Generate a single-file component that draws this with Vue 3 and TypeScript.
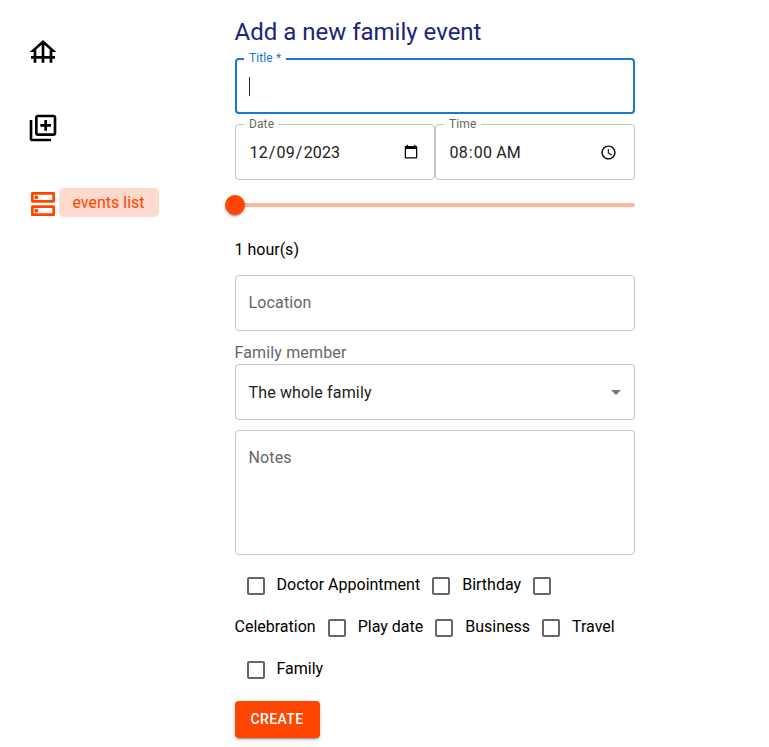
<script setup lang="ts">
import { ref } from 'vue'

const title = ref('')
const date = ref('2023-12-09')
const time = ref('08:00')
const location = ref('')
const notes = ref('')
const categories: string[] = ['Doctor Appointment', 'Birthday', 'Celebration', 'Play date', 'Business', 'Travel', 'Family']
const selected = ref<string[]>([])

function toggle(name: string): void {
  selected.value = selected.value.includes(name)
    ? selected.value.filter((item) => item !== name)
    : [...selected.value, name]
}
</script>

<template>
  <div class="page">
    <nav class="sidebar">
      <a class="nav-item">
        <svg class="nav-icon" viewBox="0 0 24 24"><path d="M19 12h3L12 3 2 12h3v3H3v2h2v3h2v-3h4v3h2v-3h4v3h2v-3h2v-2h-2v-3zM7 15v-4.81l4-3.6V15H7zm6 0V6.59l4 3.6V15h-4z" /></svg>
      </a>
      <a class="nav-item">
        <svg class="nav-icon" viewBox="0 0 24 24"><path d="M4 6H2v14c0 1.1.9 2 2 2h14v-2H4V6zm16-4H8c-1.1 0-2 .9-2 2v12c0 1.1.9 2 2 2h12c1.1 0 2-.9 2-2V4c0-1.1-.9-2-2-2zm0 14H8V4h12v12zm-7-2h2v-3h3V9h-3V6h-2v3h-3v2h3v3z" /></svg>
      </a>
      <a class="nav-item active">
        <svg class="nav-icon" viewBox="0 0 24 24"><path d="M19 15v4H5v-4h14m1-2H4c-.55 0-1 .45-1 1v6c0 .55.45 1 1 1h16c.55 0 1-.45 1-1v-6c0-.55-.45-1-1-1zM7 18.5c-.82 0-1.5-.67-1.5-1.5s.68-1.5 1.5-1.5 1.5.67 1.5 1.5-.67 1.5-1.5 1.5zM19 5v4H5V5h14m1-2H4c-.55 0-1 .45-1 1v6c0 .55.45 1 1 1h16c.55 0 1-.45 1-1V4c0-.55-.45-1-1-1zM7 8.5c-.82 0-1.5-.67-1.5-1.5S6.18 5.5 7 5.5s1.5.68 1.5 1.5S7.83 8.5 7 8.5z" /></svg>
        <span class="nav-label">events list</span>
      </a>
    </nav>

    <form class="form" @submit.prevent>
      <h1>Add a new family event</h1>

      <div class="field focused">
        <span class="caret"></span>
        <input v-model="title" class="control" type="text" aria-label="Title" />
        <label class="floating">Title *</label>
      </div>

      <div class="row">
        <div class="field">
          <input v-model="date" class="control" type="date" />
          <label class="floating">Date</label>
        </div>
        <div class="field">
          <input v-model="time" class="control time" type="time" />
          <label class="floating">Time</label>
        </div>
      </div>

      <div class="slider">
        <span class="rail"></span>
        <span class="thumb"></span>
      </div>
      <p class="duration">1 hour(s)</p>

      <div class="field">
        <input v-model="location" class="control location" type="text" placeholder="Location" />
      </div>

      <div class="caption">Family member</div>
      <div class="field select">
        <span class="value">The whole family</span>
        <svg class="arrow" viewBox="0 0 24 24"><path d="M7 10l5 5 5-5z" /></svg>
      </div>

      <div class="field notes">
        <textarea v-model="notes" class="control" placeholder="Notes"></textarea>
      </div>

      <div class="checks">
        <template v-for="name in categories" :key="name"><span class="checkbox" role="checkbox" :aria-checked="selected.includes(name)" @click="toggle(name)"><svg viewBox="0 0 24 24"><path v-if="selected.includes(name)" d="M19 3H5c-1.11 0-2 .9-2 2v14c0 1.1.89 2 2 2h14c1.11 0 2-.9 2-2V5c0-1.1-.89-2-2-2zm-9 14l-5-5 1.41-1.41L10 14.17l7.59-7.59L19 8l-9 9z" /><path v-else d="M19 5v14H5V5h14m0-2H5c-1.1 0-2 .9-2 2v14c0 1.1.9 2 2 2h14c1.1 0 2-.9 2-2V5c0-1.1-.9-2-2-2z" /></svg></span><span>{{ name }}</span></template>
      </div>

      <button class="create" type="submit">Create</button>
    </form>
  </div>
</template>

<style>
body {
  background: #fff;
}
</style>

<style scoped>
.page {
  display: flex;
  height: 747px;
  overflow: hidden;
  font-family: Roboto, "Liberation Sans", sans-serif;
  font-size: 16px;
  color: #000;
}
.sidebar {
  display: flex;
  flex-direction: column;
  gap: 44px;
  width: 208px;
  flex: none;
  box-sizing: border-box;
  padding: 36px 0 0 27px;
}
.nav-item {
  display: flex;
  align-items: center;
  height: 32px;
}
.nav-icon {
  width: 32px;
  height: 32px;
  fill: currentColor;
}
.active {
  color: #ff4500;
}
.nav-label {
  height: 29px;
  width: 100px;
  margin-top: -3px;
  line-height: 29px;
  text-align: center;
  text-indent: -1px;
  border-radius: 5px;
  background: #ffd9cc;
}
.form {
  width: 400px;
  margin-left: 26.5px;
  padding-top: 16px;
}
h1 {
  margin: 0 0 10px;
  font-size: 24px;
  line-height: 32px;
  font-weight: 400;
  color: #1a237e;
}
.field {
  position: relative;
  display: flex;
  align-items: center;
  box-sizing: border-box;
  width: 100%;
  height: 56px;
  border: 1px solid #c4c4c4;
  border-radius: 4px;
  padding: 0 13px;
}
.focused {
  border: 2px solid #1976d2;
  padding: 0 12px;
}
.floating {
  position: absolute;
  left: 8px;
  top: -9px;
  padding: 0 5px 0 5.5px;
  background: #fff;
  color: #666;
  font-size: 12px;
  line-height: 16px;
  letter-spacing: 0.11px;
}
.focused .floating {
  left: 7px;
  top: -10px;
  color: #1976d2;
}
.caret {
  width: 1px;
  height: 19px;
  background: #212121;
}
.control {
  flex: 1;
  min-width: 0;
  height: 23px;
  box-sizing: border-box;
  padding: 0;
  border: 0;
  outline: 0;
  background: none;
  font: inherit;
  letter-spacing: 0.15px;
  color: #212121;
}
.control::placeholder {
  color: #666;
  opacity: 1;
}
.time {
  height: 24px;
  padding: 1px 0.5px 0 0;
}
.location {
  margin-bottom: 2px;
}
.row {
  display: flex;
  margin-top: 10px;
}
.slider {
  position: relative;
  display: flex;
  align-items: center;
  height: 30px;
  margin-top: 10px;
}
.rail {
  width: 100%;
  height: 4px;
  border-radius: 2px;
  background: #ffb59e;
}
.thumb {
  position: absolute;
  left: -10px;
  top: 5px;
  width: 20px;
  height: 20px;
  border-radius: 50%;
  background: #ff4500;
  box-shadow: 0 3px 1px -2px rgba(0, 0, 0, 0.2), 0 2px 2px rgba(0, 0, 0, 0.14), 0 1px 5px rgba(0, 0, 0, 0.12);
}
.duration {
  margin: 20px 0 16px;
  line-height: 19px;
}
.caption {
  margin-top: 10px;
  line-height: 23px;
  letter-spacing: 0.15px;
  color: #666;
}
.select {
  justify-content: space-between;
  padding-right: 6px;
}
.value {
  letter-spacing: 0.15px;
  color: #212121;
}
.arrow {
  width: 24px;
  height: 24px;
  fill: #757575;
}
.notes {
  height: 125px;
  margin-top: 10px;
}
.notes .control {
  height: 92px;
  margin-bottom: 2px;
  resize: none;
  line-height: 23px;
}
.checks {
  margin-top: 10px;
  line-height: 24px;
}
.checkbox {
  display: inline-flex;
  box-sizing: border-box;
  width: 42px;
  height: 42px;
  padding: 9px;
  vertical-align: middle;
}
.checkbox svg {
  width: 24px;
  height: 24px;
  fill: #666;
}
.create {
  display: block;
  width: 85px;
  height: 37px;
  margin-top: 10px;
  padding: 0 0 2px;
  border: 0;
  border-radius: 4px;
  background: #ff4500;
  color: #fff;
  font-family: inherit;
  font-size: 14px;
  font-weight: 500;
  letter-spacing: 0.4px;
  text-transform: uppercase;
  box-shadow: 0 3px 1px -2px rgba(0, 0, 0, 0.2), 0 2px 2px rgba(0, 0, 0, 0.14), 0 1px 5px rgba(0, 0, 0, 0.12);
}
</style>
